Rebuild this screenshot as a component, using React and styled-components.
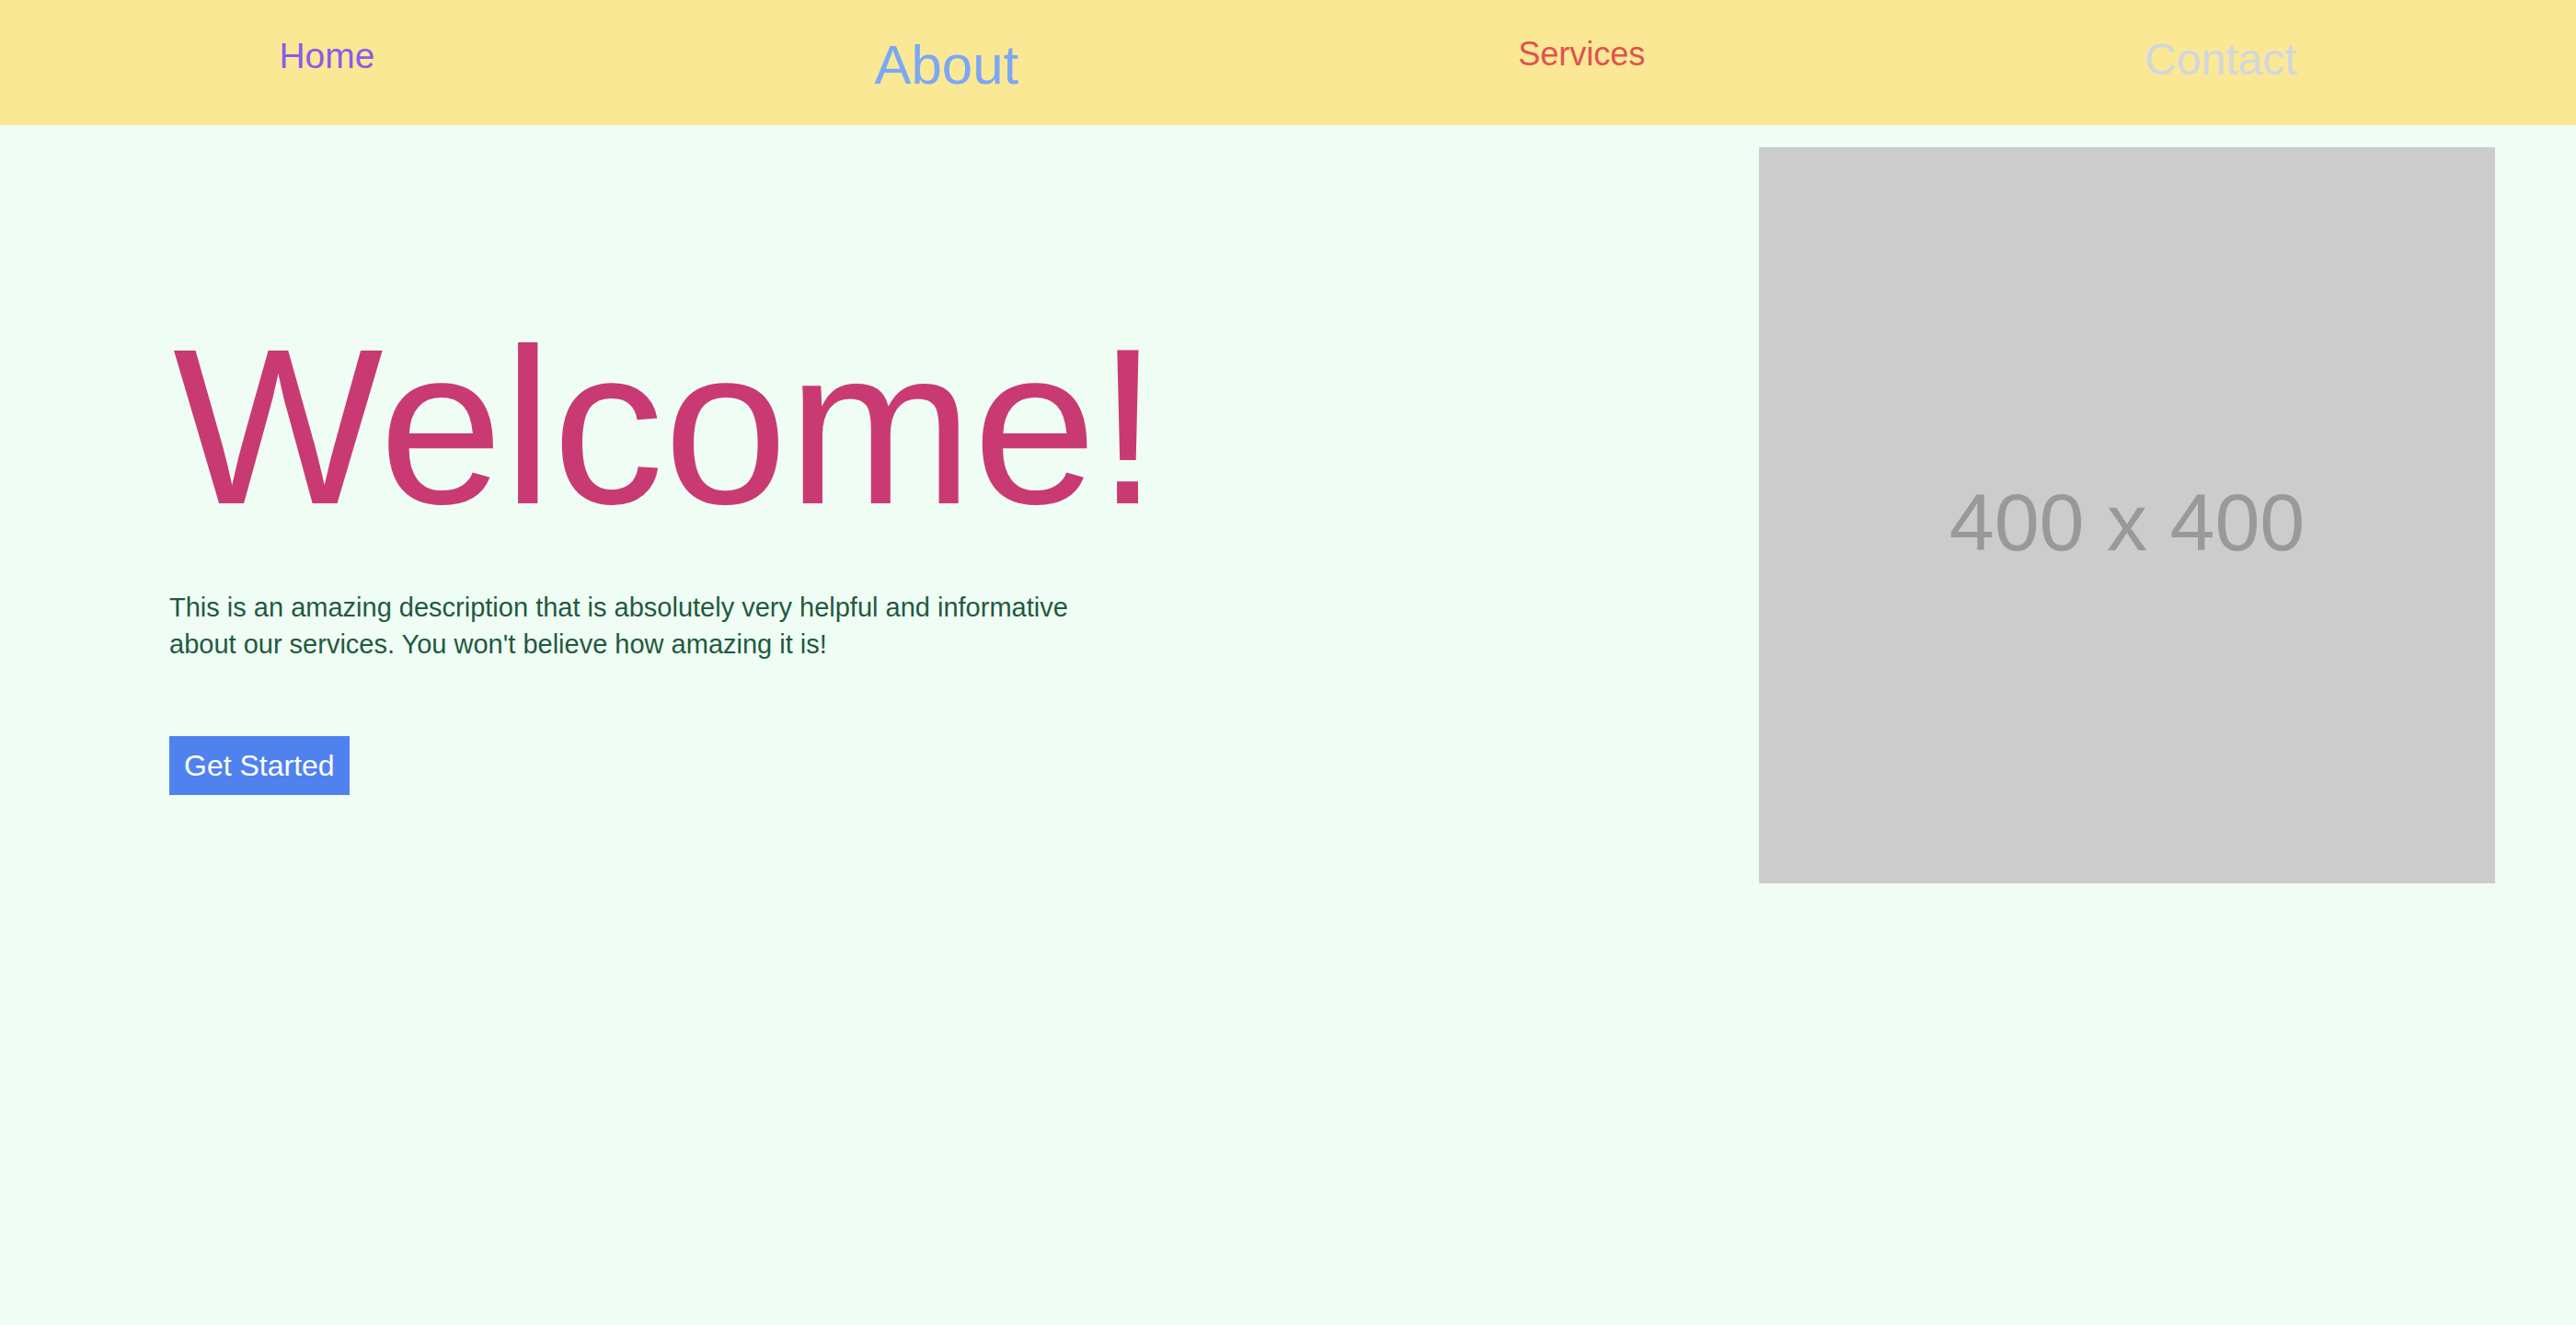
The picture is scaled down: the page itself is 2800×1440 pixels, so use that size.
import React from 'react';
import styled, { createGlobalStyle } from 'styled-components';

const GlobalStyle = createGlobalStyle`
  html, body {
    margin: 0;
    padding: 0;
    background: #effdf4;
    font-family: "Liberation Sans", Arial, sans-serif;
  }
`;

const Page = styled.div`
  min-height: 1440px;
  background: #effdf4;
`;

const Nav = styled.nav`
  height: 136px;
  box-sizing: border-box;
  background: #fae895;
  padding: 41px 32px 0;
  display: flex;
  justify-content: space-around;
  align-items: flex-start;
`;

const NavLink = styled.a`
  font-size: ${p => p.size}px;
  line-height: 1;
  color: ${p => p.color};
  text-decoration: none;
  cursor: pointer;
`;

const Hero = styled.section`
  display: flex;
  justify-content: space-between;
  align-items: flex-start;
  padding: 24px 88px 0 184px;
`;

const Intro = styled.div`
  display: flex;
  flex-direction: column;
  align-items: flex-start;
`;

const Title = styled.h1`
  margin: 161px 0 0 4px;
  font-size: 242px;
  font-weight: 400;
  line-height: 284px;
  color: #c93a73;
`;

const Description = styled.p`
  margin: 35px 0 0;
  max-width: 1010px;
  font-size: 29px;
  line-height: 40px;
  color: #1f5a3e;
`;

const Button = styled.button`
  margin-top: 80px;
  padding: 14px 16px;
  border: none;
  background: #5082ef;
  color: #fff;
  font-family: inherit;
  font-size: 32px;
  line-height: 36px;
  cursor: pointer;
`;

const Placeholder = styled.div`
  width: 800px;
  height: 800px;
  background: #cccccc;
  color: #999999;
  display: flex;
  align-items: center;
  justify-content: center;
  box-sizing: border-box;
  padding-top: 16px;
  font-size: 88px;
`;

const links = [
  { label: 'Home', size: 39, color: '#8b5ce8' },
  { label: 'About', size: 60, color: '#7aa8f4' },
  { label: 'Services', size: 36, color: '#e0524f' },
  { label: 'Contact', size: 48, color: '#d2d6df' },
];

export default function App() {
  return (
    <Page>
      <GlobalStyle />
      <Nav>
        {links.map(l => (
          <NavLink key={l.label} size={l.size} color={l.color}>{l.label}</NavLink>
        ))}
      </Nav>
      <Hero>
        <Intro>
          <Title>Welcome!</Title>
          <Description>
            This is an amazing description that is absolutely very helpful and informative about our services. You won't believe how amazing it is!
          </Description>
          <Button>Get Started</Button>
        </Intro>
        <Placeholder>400 x 400</Placeholder>
      </Hero>
    </Page>
  );
}
